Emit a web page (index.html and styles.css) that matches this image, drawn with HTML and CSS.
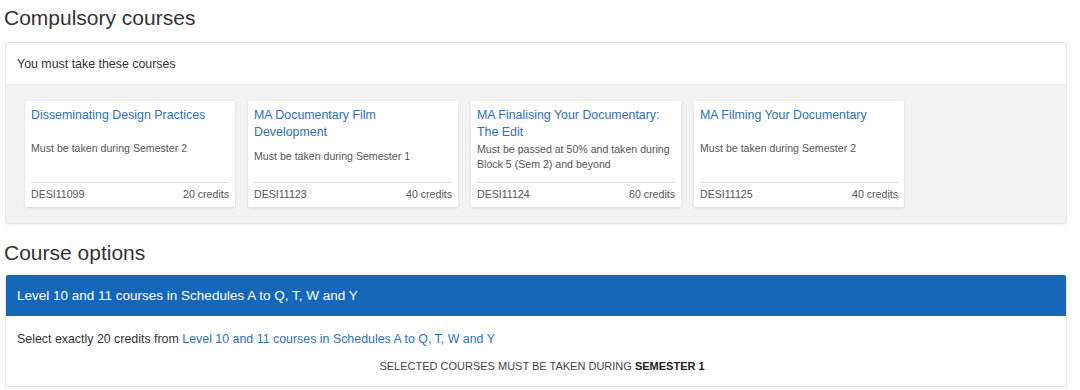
FILE: index.html
```html
<!DOCTYPE html>
<html>
  <head>
    <meta name="viewport" content="width=device-width, initial-scale=1.0">
    <link rel="stylesheet" href="styles.css">
  </head>
  <body>
    <h2 class="section-title">Compulsory courses</h2>
    <div class="panel">
      <div class="panel-header">You must take these courses</div>
      <div class="panel-body">
        <div class="card">
          <a class="card-title" href="#">Disseminating Design Practices</a>
          <div class="card-desc">Must be taken during Semester 2</div>
          <div class="card-footer">
            <span>DESI11099</span>
            <span>20 credits</span>
          </div>
        </div>
        <div class="card">
          <a class="card-title" href="#">MA Documentary Film Development</a>
          <div class="card-desc">Must be taken during Semester 1</div>
          <div class="card-footer">
            <span>DESI11123</span>
            <span>40 credits</span>
          </div>
        </div>
        <div class="card">
          <a class="card-title" href="#">MA Finalising Your Documentary: The Edit</a>
          <div class="card-desc">Must be passed at 50% and taken during Block 5 (Sem 2) and beyond</div>
          <div class="card-footer">
            <span>DESI11124</span>
            <span>60 credits</span>
          </div>
        </div>
        <div class="card">
          <a class="card-title" href="#">MA Filming Your Documentary</a>
          <div class="card-desc">Must be taken during Semester 2</div>
          <div class="card-footer">
            <span>DESI11125</span>
            <span>40 credits</span>
          </div>
        </div>
      </div>
    </div>

    <h2 class="section-title second">Course options</h2>
    <div class="panel">
      <div class="option-header">Level 10 and 11 courses in Schedules A to Q, T, W and Y</div>
      <div class="option-body">
        <p class="option-rule">Select exactly 20 credits from <a href="#">Level 10 and 11 courses in Schedules A to Q, T, W and Y</a></p>
        <p class="option-note">Selected courses must be taken during <b>Semester 1</b></p>
      </div>
    </div>
  </body>
</html>
```

FILE: styles.css
```css
body {
  margin: 0;
  font-family: "Liberation Sans", Arial, sans-serif;
  color: #333;
  background-color: #fff;
}

a {
  color: #2f6fbd;
  text-decoration: none;
}

/* Headings */
.section-title {
  margin: 0 0 12px 4px;
  padding-top: 6px;
  font-size: 21px;
  line-height: 24px;
  font-weight: normal;
  color: #333;
}

.section-title.second {
  margin-top: 17px;
  padding-top: 0;
  margin-bottom: 9px;
}

/* Panels */
.panel {
  margin: 0 13px 0 5px;
  border: 1px solid #e8e8e8;
  border-radius: 3px;
  box-shadow: 0 1px 2px rgba(0, 0, 0, 0.06);
  overflow: hidden;
  background-color: #fff;
}

.panel-header {
  height: 41px;
  display: flex;
  align-items: center;
  padding: 0 11px;
  font-size: 12.4px;
  color: #333;
  border-bottom: 1px solid #ececec;
}

.panel-body {
  display: flex;
  gap: 13px;
  padding: 16px 19px;
  background-color: #f2f2f2;
}

/* Course cards */
.card {
  width: 210px;
  height: 106px;
  box-sizing: border-box;
  padding: 6px;
  background-color: #fff;
  border-radius: 2px;
  box-shadow: 0 1px 3px rgba(0, 0, 0, 0.1);
  display: flex;
  flex-direction: column;
}

.card-title {
  font-size: 12.4px;
  line-height: 17px;
}

.card-desc {
  flex: 1;
  display: flex;
  align-items: center;
  margin-bottom: 10px;
  font-size: 10.6px;
  line-height: 15px;
  color: #555;
}

.card-footer {
  display: flex;
  justify-content: space-between;
  border-top: 1px solid #e2e2e2;
  padding-top: 5px;
  font-size: 10.6px;
  line-height: 13px;
  color: #555;
}

/* Course options */
.option-header {
  height: 41px;
  display: flex;
  align-items: center;
  padding: 0 11px;
  background-color: #1767b8;
  color: #fff;
  font-size: 13.5px;
}

.option-body {
  padding: 15px 11px 13px 11px;
}

.option-rule {
  margin: 0;
  font-size: 12.4px;
  line-height: 16px;
  color: #333;
}

.option-note {
  margin: 12px 0 0 0;
  padding-left: 12px;
  text-align: center;
  text-transform: uppercase;
  font-size: 11px;
  line-height: 14px;
  color: #444;
}

.option-note b {
  color: #222;
}
```
